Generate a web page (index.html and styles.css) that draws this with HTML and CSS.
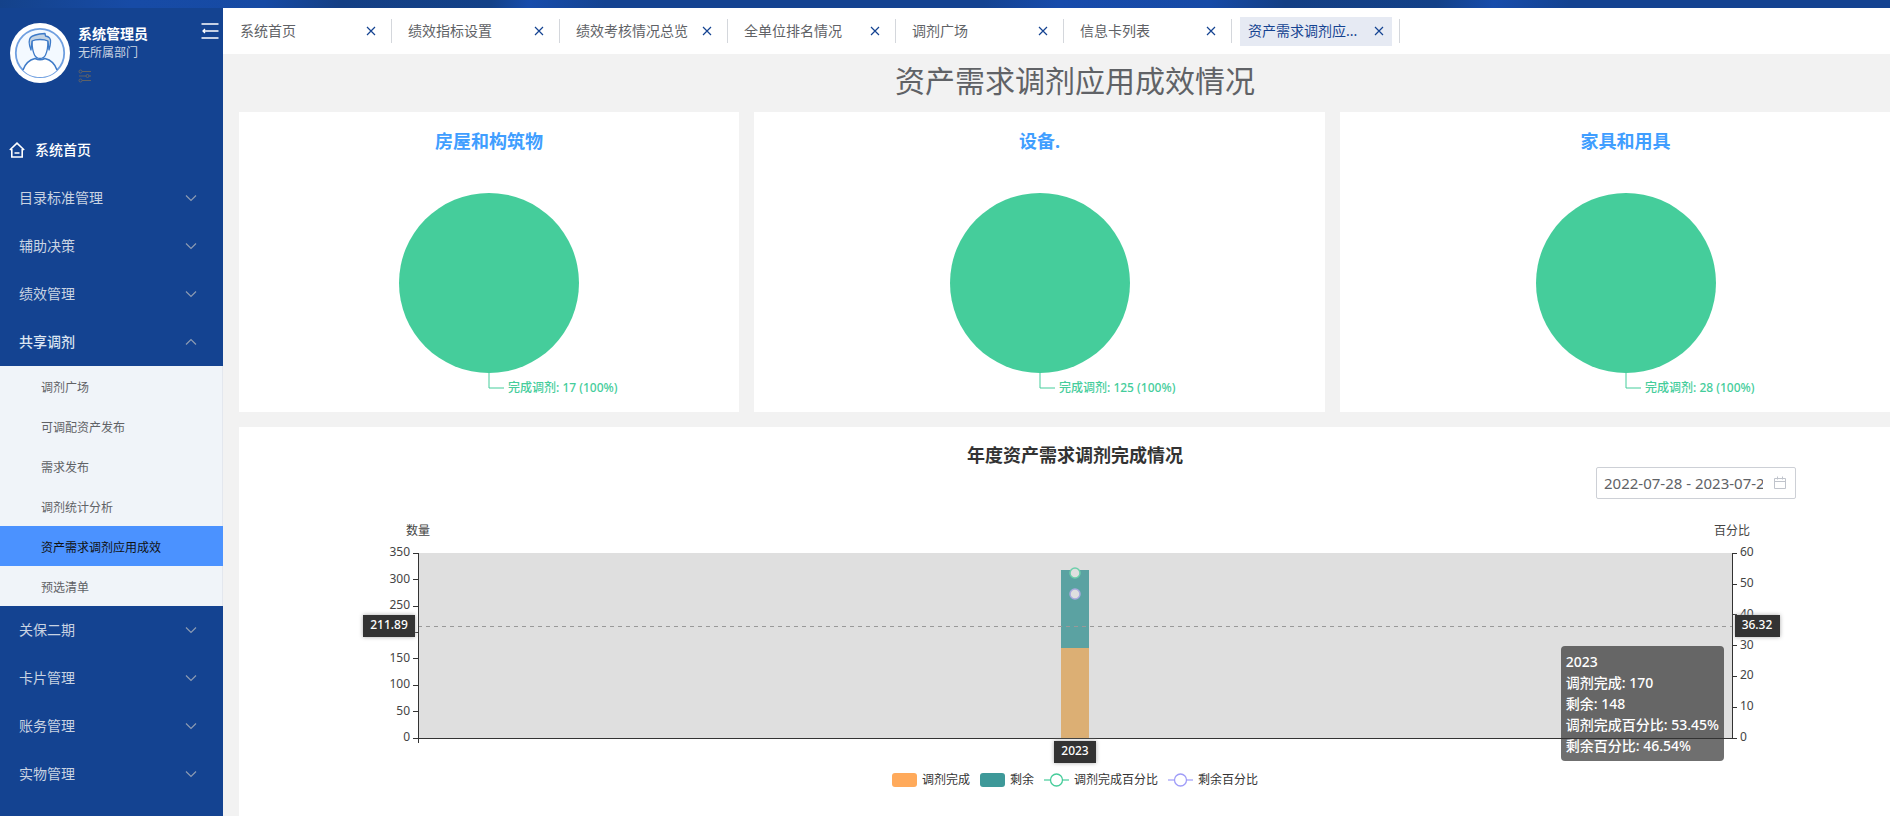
FILE: index.html
```html
<!DOCTYPE html>
<html lang="zh-CN">
<head>
<meta charset="utf-8">
<title>资产需求调剂应用成效情况</title>
<link rel="stylesheet" href="styles.css">
</head>
<body>
<svg class="defs" width="0" height="0" aria-hidden="true">
  <symbol id="chevron" viewBox="0 0 12 12"><path d="M1 3.500 6 8.500l5-5" fill="none" stroke="currentColor" stroke-width="1.200"/></symbol>
  <symbol id="cross" viewBox="0 0 10 10"><path d="M1 1l8 8M9 1l-8 8" fill="none" stroke="currentColor" stroke-width="1.200"/></symbol>
</svg>
<header class="banner"></header>
<div class="layout">
  <aside class="sidebar">
    <div class="profile">
      <svg class="avatar" viewBox="0 0 60 60">
        <circle cx="30" cy="30" r="30" fill="#fff"/>
        <circle cx="30" cy="30" r="24.200" fill="#f3f9ff" stroke="#6f9fe0" stroke-width="1.800"/>
        <path d="M13 47c2-6 6-10 12-11.500h10c6 1.500 10 5.500 12 11.500-4 4.500-10 7-17 7s-13-2.500-17-7z" fill="#fff"/>
        <path d="M13 47c2-6 6-10 12-11.500 3 1.500 7 1.500 10 0 6 1.500 10 5.500 12 11.500" fill="none" stroke="#3d7ac8" stroke-width="1.500"/>
        <path d="M22 17c0 7 .5 11 2.500 15 1.300 2.500 3 3.500 5.500 3.500s4.200-1 5.500-3.500c2-4 2.500-8 2.500-15-4-1.500-12-1.500-16 0z" fill="#f8fbff" stroke="#3d7ac8" stroke-width="1.300"/>
        <path d="M21 27c-2-5-2.500-10-.5-12.500 2-2.500 8-3.500 14.500-4l.5 2.500c4 .5 5.500 3 5 6.500-.2 3-.8 5.500-1.500 7.500l-1-9c-4-2-12-2-16 0z" fill="#c3d3e3" stroke="#3d7ac8" stroke-width="1.300" stroke-linejoin="round"/>
      </svg>
      <div class="who">
        <strong class="who-name">系统管理员</strong>
        <span class="who-dept">无所属部门</span>
        <svg class="who-settings" viewBox="0 0 14 14" fill="none" stroke="#606266"><circle cx="2.500" cy="2.500" r="1.500"/><circle cx="9.500" cy="7" r="1.500"/><circle cx="2.500" cy="11.500" r="1.500"/><path d="M4 2.500h9M1 7h7M11 7h2M4 11.500h9"/></svg>
      </div>
      <button class="collapse" type="button" aria-label="收起菜单">
        <svg width="18" height="16" viewBox="0 0 18 16" fill="none" stroke="#fff" stroke-width="1.300"><path d="M.5 1h17M.5 15h17M2 8h15.500M4 6L2 8l2 2"/></svg>
      </button>
    </div>
    <nav class="menu">
      <a class="menu-home" href="#"><svg width="16" height="16" viewBox="0 0 16 16" fill="none" stroke="#fff" stroke-width="1.600"><path d="M.8 8 8 1.200 15.200 8M2.800 7v8h10.400V7M5.500 11h5"/></svg>系统首页</a>
      <a class="menu-item" href="#">目录标准管理<svg><use href="#chevron"/></svg></a>
      <a class="menu-item" href="#">辅助决策<svg><use href="#chevron"/></svg></a>
      <a class="menu-item" href="#">绩效管理<svg><use href="#chevron"/></svg></a>
      <a class="menu-item open" href="#">共享调剂<svg><use href="#chevron"/></svg></a>
      <div class="submenu">
        <a href="#">调剂广场</a>
        <a href="#">可调配资产发布</a>
        <a href="#">需求发布</a>
        <a href="#">调剂统计分析</a>
        <a class="current" href="#">资产需求调剂应用成效</a>
        <a href="#">预选清单</a>
      </div>
      <a class="menu-item" href="#">关保二期<svg><use href="#chevron"/></svg></a>
      <a class="menu-item" href="#">卡片管理<svg><use href="#chevron"/></svg></a>
      <a class="menu-item" href="#">账务管理<svg><use href="#chevron"/></svg></a>
      <a class="menu-item" href="#">实物管理<svg><use href="#chevron"/></svg></a>
      <a class="menu-item" href="#">工具<svg><use href="#chevron"/></svg></a>
    </nav>
  </aside>
  <main class="main">
    <nav class="tabs">
      <div class="tab"><a href="#">系统首页</a><button type="button" aria-label="关闭"><svg><use href="#cross"/></svg></button></div>
      <div class="tab"><a href="#">绩效指标设置</a><button type="button" aria-label="关闭"><svg><use href="#cross"/></svg></button></div>
      <div class="tab"><a href="#">绩效考核情况总览</a><button type="button" aria-label="关闭"><svg><use href="#cross"/></svg></button></div>
      <div class="tab"><a href="#">全单位排名情况</a><button type="button" aria-label="关闭"><svg><use href="#cross"/></svg></button></div>
      <div class="tab"><a href="#">调剂广场</a><button type="button" aria-label="关闭"><svg><use href="#cross"/></svg></button></div>
      <div class="tab"><a href="#">信息卡列表</a><button type="button" aria-label="关闭"><svg><use href="#cross"/></svg></button></div>
      <div class="tab active"><a href="#">资产需求调剂应...</a><button type="button" aria-label="关闭"><svg><use href="#cross"/></svg></button></div>
    </nav>
    <div class="content">
      <h1 class="page-title">资产需求调剂应用成效情况</h1>
      <div class="pies">
        <section class="card pie-card">
          <h2>房屋和构筑物</h2>
          <svg class="pie" viewBox="0 0 300 220"><circle cx="150" cy="90" r="90"/><path d="M150 180v15h15"/><text x="169" y="199">完成调剂: 17 (100%)</text></svg>
        </section>
        <section class="card pie-card">
          <h2>设备.</h2>
          <svg class="pie" viewBox="0 0 300 220"><circle cx="150" cy="90" r="90"/><path d="M150 180v15h15"/><text x="169" y="199">完成调剂: 125 (100%)</text></svg>
        </section>
        <section class="card pie-card">
          <h2>家具和用具</h2>
          <svg class="pie" viewBox="0 0 300 220"><circle cx="150" cy="90" r="90"/><path d="M150 180v15h15"/><text x="169" y="199">完成调剂: 28 (100%)</text></svg>
        </section>
      </div>
      <section class="card year-card">
        <h2>年度资产需求调剂完成情况</h2>
        <label class="range">
          <input type="text" value="2022-07-28 - 2023-07-27" aria-label="日期范围">
          <svg width="14" height="14" viewBox="0 0 14 14" fill="none" stroke="#c0c4cc"><path d="M1.500 2.500h11v10h-11zM1.500 5.500h11M4.500.5v3M9.500.5v3"/></svg>
        </label>
        <div class="chart">
          <svg class="plot" width="100%" height="186">
            <rect width="100%" height="185" fill="#dfdfdf"/>
            <svg x="50%" class="bars">
              <rect x="-14" y="17" width="28" height="78" fill="#5ba2a2"/>
              <rect x="-14" y="95" width="28" height="90" fill="#dcaf74"/>
              <circle cy="20" r="5" fill="#dfdfdf" stroke="#6dcfab" stroke-width="1.500"/>
              <circle cy="41" r="5" fill="#dfdfdf" stroke="#aaaadf" stroke-width="1.500"/>
            </svg>
            <line x1="0" x2="100%" y1="73.500" y2="73.500" stroke="#999" stroke-dasharray="4 4"/>
            <g class="axis">
              <rect y="0" width="1" height="190"/>
              <rect x="100%" width="1" height="186"/>
              <rect y="185" width="100%" height="1"/>
              <path d="M-5 .5h5M-5 26.500h5M-5 53.500h5M-5 79.500h5M-5 105.500h5M-5 132.500h5M-5 158.500h5M-5 185.500h5"/>
              <svg x="100%" class="bars"><path d="M0 .5h5M0 31.500h5M0 61.500h5M0 92.500h5M0 123.500h5M0 154.500h5M0 185.500h5"/></svg>
            </g>
            <g class="label" text-anchor="end">
              <text x="-8" y="3">350</text><text x="-8" y="30">300</text><text x="-8" y="56">250</text><text x="-8" y="109">150</text><text x="-8" y="135">100</text><text x="-8" y="162">50</text><text x="-8" y="188">0</text>
            </g>
            <g class="label">
              <text x="100%" dx="8" y="3">60</text><text x="100%" dx="8" y="34">50</text><text x="100%" dx="8" y="65">40</text><text x="100%" dx="8" y="96">30</text><text x="100%" dx="8" y="126">20</text><text x="100%" dx="8" y="157">10</text><text x="100%" dx="8" y="188">0</text>
            </g>
            <g class="label" text-anchor="middle">
              <text x="0" y="-18">数量</text><text x="100%" y="-18">百分比</text>
            </g>
            <g class="pointer" text-anchor="middle">
              <rect x="-55" y="62" width="52" height="22"/><text x="-29" y="76">211.89</text>
              <svg x="50%" class="bars"><rect x="-21" y="188" width="42" height="22"/><text y="202">2023</text></svg>
              <svg x="100%" class="bars"><rect x="3" y="62" width="45" height="22"/><text x="25" y="76">36.32</text></svg>
            </g>
          </svg>
          <div class="tooltip">2023<br>调剂完成: 170<br>剩余: 148<br>调剂完成百分比: 53.45%<br>剩余百分比: 46.54%</div>
        </div>
        <ul class="legend">
          <li><i class="swatch orange"></i>调剂完成</li>
          <li><i class="swatch teal"></i>剩余</li>
          <li><svg width="25" height="14" fill="none" stroke="#45cc9a"><path d="M0 7h25" stroke-width="2" opacity=".6"/><circle cx="12.500" cy="7" r="6" fill="#fff" stroke-width="1.300"/></svg>调剂完成百分比</li>
          <li><svg width="25" height="14" fill="none" stroke="#9f9cf8"><path d="M0 7h25" stroke-width="2" opacity=".6"/><circle cx="12.500" cy="7" r="6" fill="#fff" stroke-width="1.300"/></svg>剩余百分比</li>
        </ul>
      </section>
    </div>
  </main>
</div>
</body>
</html>
```

FILE: styles.css
```css
* { box-sizing: border-box; }
body {
  margin: 0;
  height: 100vh;
  display: flex;
  flex-direction: column;
  overflow: hidden;
  background: #f2f2f2;
  color: #606266;
  font: 14px/20px "Noto Sans", "Noto Sans CJK SC", sans-serif;
}
a { color: inherit; text-decoration: none; }
button { border: 0; padding: 0; background: none; color: inherit; cursor: pointer; }
h1, h2, ul { margin: 0; padding: 0; }
.defs { position: absolute; }

.banner {
  flex: none;
  height: 8px;
  background: linear-gradient(100deg, #14428a 0, #174ba6 7%, #164aa4 14%, #143f84 18%, #134188 26%, #174cab 28%, #144391 32%, #144391 52%, #174bab 56%, #164aa6 64%, #143f84 68%, #134188 76%, #174cab 79%, #144391 83%);
}
.layout { flex: 1; min-height: 0; display: flex; }

.sidebar { flex: none; width: 223px; overflow: hidden; background: #144391; color: #c9d3e2; }
.profile { height: 118px; display: flex; padding: 15px 4px 0 10px; }
.avatar { width: 60px; height: 60px; margin-right: 8px; }
.who { flex: 1; display: flex; flex-direction: column; }
.who-name { color: #fff; line-height: 22px; }
.who-dept { font-size: 12px; line-height: 16px; }
.who-settings { width: 14px; height: 14px; margin-top: 8px; }
.collapse { align-self: flex-start; height: 18px; }
.menu-home, .menu-item { display: flex; align-items: center; height: 48px; }
.menu-home { padding-left: 9px; gap: 10px; color: #fff; font-weight: 500; }
.menu-item { justify-content: space-between; padding: 0 26px 0 19px; }
.menu-item svg { width: 12px; height: 12px; color: #8c9bb3; }
.menu-item.open { font-weight: 500; color: #dce5f2; }
.menu-item.open svg { transform: rotate(180deg); }
.submenu { background: #f0f4f9; color: #606266; font-size: 12px; border-right: 1px solid #e3e7ee; }
.submenu a { display: block; line-height: 36px; padding: 4px 0 0 41px; }
.submenu .current { background: #4b92ff; color: #111; margin-right: -1px; }

.main { flex: 1; min-width: 0; overflow: hidden; }
.tabs { height: 46px; display: flex; align-items: center; padding-left: 1px; background: #fff; }
.tab { flex: none; display: flex; align-items: center; width: 168px; height: 24px; padding: 0 15px 0 16px; border-right: 1px solid #d4d7dc; }
.tab a { flex: 1; white-space: nowrap; }
.tab button { color: #144391; line-height: 0; }
.tab svg { width: 10px; height: 10px; }
.tab.active { color: #144391; background: linear-gradient(#e6eaf3, #e6eaf3) 8px 0 / 152px 100% no-repeat; height: 29px; border-color: transparent; }
.tab.active::after { content: ""; width: 1px; height: 24px; margin: 0 -16px 0 15px; background: #d4d7dc; }

.content { margin-right: -21px; padding-left: 16px; }
.page-title { font-size: 30px; font-weight: 400; line-height: 54px; padding-bottom: 4px; text-align: center; }
.card { background: #fff; }
.card h2 { font-size: 18px; line-height: 24px; text-align: center; }
.pies { display: grid; grid-template-columns: 500fr 571fr 571fr; gap: 15px; margin-bottom: 15px; }
.pie-card { height: 300px; padding-top: 17px; display: flex; flex-direction: column; align-items: center; }
.pie-card h2 { color: #409eff; margin-bottom: 40px; }
.pie { width: 300px; height: 220px; flex: none; fill: #45cd9b; font-size: 12px; font-weight: 500; }
.pie path { fill: none; stroke: #45cd9b; }

.year-card { padding: 16px 0 60px; display: flex; flex-direction: column; }
.year-card h2 { color: #333; }
.range { align-self: flex-end; display: flex; align-items: center; gap: 10px; width: 200px; height: 32px; margin-right: 115px; padding: 0 8px 0 7px; border: 1px solid #cdd0d6; border-radius: 2px; }
.range input { flex: 1; min-width: 0; border: 0; padding: 0; background: none; color: #606266; font: inherit; font-size: 15px; outline: 0; }
.chart { position: relative; margin: 54px 179px 0; }
.plot { display: block; overflow: visible; font-size: 12px; }
.bars { overflow: visible; }
.axis { fill: #333; stroke: none; }
.axis path { stroke: #333; }
.label { fill: #444; }
.pointer rect { fill: #333; filter: drop-shadow(0 0 2px #aaa); }
.pointer text { fill: #fff; font-weight: 500; }
.tooltip { position: absolute; top: 93px; right: 8px; padding: 5px; border-radius: 4px; background: rgba(50, 50, 50, .7); color: #fff; font-weight: 500; line-height: 21px; white-space: nowrap; }
.legend { display: flex; justify-content: center; gap: 10px; margin-top: 34px; list-style: none; font-size: 12px; line-height: 14px; color: #333; }
.legend li { display: flex; align-items: center; gap: 5px; }
.swatch { width: 25px; height: 14px; border-radius: 3px; }
.orange { background: #ffaa5b; }
.teal { background: #3e9999; }
```
